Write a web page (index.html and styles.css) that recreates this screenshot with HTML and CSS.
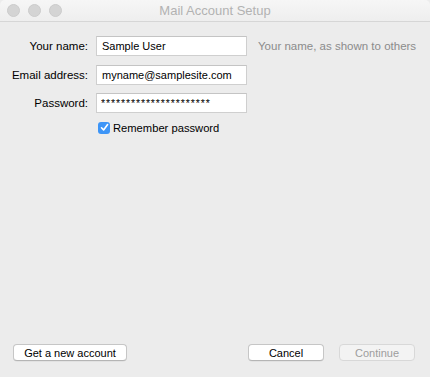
FILE: index.html
```html
<!DOCTYPE html>
<html lang="en">
<head>
    <meta charset="UTF-8">
    <meta name="viewport" content="width=device-width, initial-scale=1.0">
    <title>Mail Account Setup</title>
    <link rel="stylesheet" href="styles.css">
</head>
<body>
    <div class="window">
        <div class="titlebar">
            <div class="lights">
                <span class="light"></span>
                <span class="light"></span>
                <span class="light"></span>
            </div>
            <div class="title">Mail Account Setup</div>
        </div>

        <div class="content">
            <div class="form">
                <label class="label" for="name">Your name:</label>
                <input class="field" id="name" type="text" value="Sample User">
                <div class="hint">Your name, as shown to others</div>

                <label class="label" for="email">Email address:</label>
                <input class="field" id="email" type="text" value="myname@samplesite.com">
                <div></div>

                <label class="label" for="pass">Password:</label>
                <input class="field password" id="pass" type="text" value="**********************">
                <div></div>

                <div></div>
                <label class="remember">
                    <span class="check">
                        <svg width="9" height="9" viewBox="0 0 9 9">
                            <path d="M1.5 4.8 L3.6 7 L7.6 1.6" fill="none" stroke="#fff" stroke-width="1.6" stroke-linecap="round" stroke-linejoin="round"/>
                        </svg>
                    </span>
                    Remember password
                </label>
                <div></div>
            </div>
        </div>

        <div class="footer">
            <button class="btn wide">Get a new account</button>
            <div class="footer-right">
                <button class="btn">Cancel</button>
                <button class="btn disabled">Continue</button>
            </div>
        </div>
    </div>
</body>
</html>
```

FILE: styles.css
```css
/* General */
html, body {
    margin: 0;
    height: 100%;
}

body {
    font-family: 'Liberation Sans', Arial, sans-serif;
    font-size: 11.5px;
    color: #000000;
    background-color: #ececec;
}

.window {
    height: 100vh;
    display: flex;
    flex-direction: column;
    background-color: #ececec;
    border-radius: 5px 5px 0 0;
    overflow: hidden;
}

/* Title bar */
.titlebar {
    height: 21px;
    flex: none;
    display: flex;
    align-items: center;
    position: relative;
    background: linear-gradient(#f6f6f6, #eeeeee);
    border-bottom: 1px solid #d6d6d6;
}

.lights {
    display: flex;
    gap: 8px;
    padding-left: 7px;
}

.light {
    width: 11px;
    height: 11px;
    border-radius: 50%;
    background-color: #d4d4d4;
    border: 0.5px solid #cbcbcb;
}

.title {
    position: absolute;
    left: 0;
    right: 0;
    text-align: center;
    font-size: 13px;
    color: #b2b2b2;
    pointer-events: none;
}

/* Form */
.content {
    flex: 1;
    padding-top: 14px;
}

.form {
    display: grid;
    grid-template-columns: 88px 151px auto;
    grid-auto-rows: 20px;
    column-gap: 8px;
    row-gap: 8.5px;
    align-items: center;
}

.label {
    text-align: right;
}

.field {
    box-sizing: border-box;
    width: 151px;
    height: 20px;
    margin: 0;
    padding: 0 5px;
    border: 1px solid #cfcfcf;
    border-top-color: #c4c4c4;
    background-color: #ffffff;
    font-family: inherit;
    font-size: 11px;
    color: #000000;
    outline: none;
}

.password {
    font-size: 10.5px;
    letter-spacing: 0.9px;
    padding-left: 4px;
}

.hint {
    margin-left: 3px;
    font-size: 11.5px;
    color: #8b8b8b;
    white-space: nowrap;
}

.remember {
    align-self: start;
    display: flex;
    align-items: center;
    gap: 3px;
    padding-left: 2px;
    font-size: 11.2px;
    white-space: nowrap;
}

.check {
    width: 12px;
    height: 12px;
    border-radius: 3px;
    background-color: #3d95f7;
    display: flex;
    align-items: center;
    justify-content: center;
}

/* Footer */
.footer {
    flex: none;
    display: flex;
    justify-content: space-between;
    align-items: center;
    padding: 0 15px 16px 13px;
}

.footer-right {
    display: flex;
    gap: 15px;
}

.btn {
    box-sizing: border-box;
    width: 76px;
    height: 17px;
    padding: 0;
    background-color: #ffffff;
    border: 1px solid #c6c6c6;
    border-bottom-color: #b5b5b5;
    border-radius: 4px;
    font-family: inherit;
    font-size: 11px;
    color: #000000;
    box-shadow: 0 0.5px 0.5px rgba(0, 0, 0, 0.08);
}

.wide {
    width: 114px;
}

.disabled {
    background-color: #f3f3f3;
    border-color: #d8d8d8;
    color: #9d9d9d;
    box-shadow: none;
}
```
